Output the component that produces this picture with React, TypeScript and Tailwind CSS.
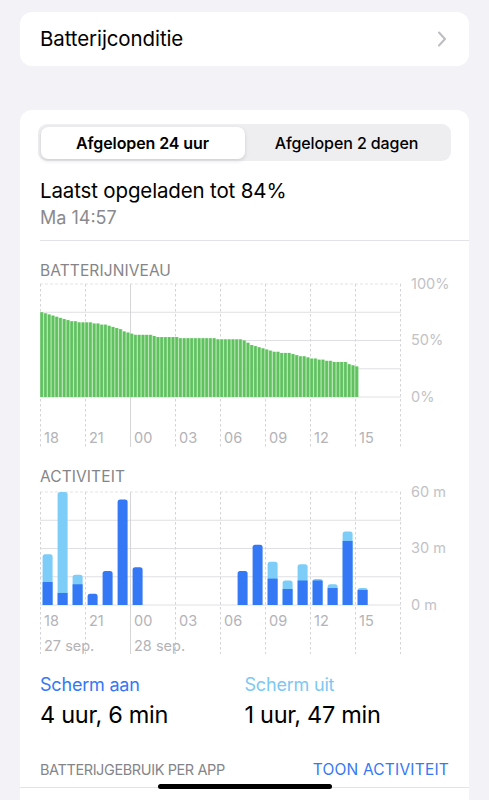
import React from "react";

const FONT = 'Inter, "Noto Sans", "Liberation Sans", sans-serif';

const batteryPts: [number, number][] = [
  [0, 75.5], [10, 73], [23, 69], [32, 67], [43, 66], [57, 65], [70, 63], [80, 60], [87, 57], [93, 55],
  [107, 55], [117, 53.5], [147, 52], [150, 52.5], [180, 51.3], [203, 50.5], [210, 46.6], [223, 42.5],
  [232, 40], [250, 38.6], [263, 35.7], [283, 32.7], [297, 31], [305, 30.5], [310, 28.3], [318, 26],
];

function levelAt(x: number) {
  for (let i = 0; i < batteryPts.length - 1; i++) {
    const [x0, y0] = batteryPts[i];
    const [x1, y1] = batteryPts[i + 1];
    if (x >= x0 && x <= x1) return y0 + ((y1 - y0) * (x - x0)) / (x1 - x0);
  }
  return batteryPts[batteryPts.length - 1][1];
}

const hours = ["18", "21", "00", "03", "06", "09", "12", "15"];

function Grid({ top, bottom, lineEnd }: { top: number; bottom: number; lineEnd: number }) {
  const step = (bottom - top) / 4;
  return (
    <g>
      {[0, 1, 2, 3, 4].map((k) => (
        <line
          key={k}
          x1={0}
          x2={361}
          y1={top + step * k}
          y2={top + step * k}
          stroke={k === 0 ? "#e3e3e7" : "#e0e0e4"}
          strokeWidth={1}
          strokeDasharray={k === 0 ? "3 2" : undefined}
        />
      ))}
      {Array.from({ length: 9 }).map((_, k) => (
        <line
          key={k}
          x1={0.5 + 45 * k}
          x2={0.5 + 45 * k}
          y1={top}
          y2={lineEnd}
          stroke={k === 2 ? "#d6d6da" : "#d3d3d8"}
          strokeWidth={1}
          strokeDasharray={k === 2 ? undefined : "2.5 2.5"}
        />
      ))}
    </g>
  );
}

function AxisText({ x, y, children, fill = "#b3b3b8" }: { x: number; y: number; children: React.ReactNode; fill?: string }) {
  return (
    <text x={x} y={y} fontSize={14.5} fill={fill} fontFamily={FONT} dominantBaseline="middle">
      {children}
    </text>
  );
}

function BatteryChart() {
  const top = 4;
  const bottom = 117;
  const h = bottom - top;
  const bars = Array.from({ length: 85 }).map((_, i) => {
    const x = i * 3.75;
    const lvl = Math.round(levelAt(x + 1.2));
    const y = bottom - (lvl / 100) * h;
    return { x, y };
  });
  return (
    <svg width={429} height={170} className="block overflow-visible">
      <Grid top={top} bottom={bottom} lineEnd={167} />
      {bars.map((b, i) => (
        <g key={i}>
          <rect x={b.x} y={b.y} width={3.75} height={bottom - b.y} fill="#ace1a9" />
          <rect x={b.x + 0.4} y={b.y} width={2.5} height={bottom - b.y} fill="#5fc25f" />
        </g>
      ))}
      <AxisText x={371} y={top + 1} fill="#c2c2c6">100%</AxisText>
      <AxisText x={371} y={top + h / 2 + 1} fill="#c2c2c6">50%</AxisText>
      <AxisText x={371} y={bottom + 1} fill="#c2c2c6">0%</AxisText>
      {hours.map((t, k) => (
        <AxisText key={t} x={45 * k + 4} y={159}>
          {t}
        </AxisText>
      ))}
    </svg>
  );
}

const activity: { i: number; dark: number; light?: number }[] = [
  { i: 0, dark: 12.2, light: 27 },
  { i: 1, dark: 6.4, light: 60 },
  { i: 2, dark: 11, light: 16 },
  { i: 3, dark: 6 },
  { i: 4, dark: 18 },
  { i: 5, dark: 56 },
  { i: 6, dark: 20 },
  { i: 13, dark: 18 },
  { i: 14, dark: 32 },
  { i: 15, dark: 14, light: 23 },
  { i: 16, dark: 8.5, light: 13 },
  { i: 17, dark: 13, light: 21.6 },
  { i: 18, dark: 13, light: 13.8 },
  { i: 19, dark: 9, light: 11 },
  { i: 20, dark: 34, light: 39 },
  { i: 21, dark: 8, light: 9 },
];

function roundedTop(x: number, y: number, w: number, bottom: number, r: number) {
  const rr = Math.min(r, (bottom - y) / 2);
  return `M${x},${bottom} L${x},${y + rr} Q${x},${y} ${x + rr},${y} L${x + w - rr},${y} Q${x + w},${y} ${x + w},${y + rr} L${x + w},${bottom} Z`;
}

function ActivityChart() {
  const top = 6;
  const bottom = 119;
  const h = bottom - top;
  const ym = (m: number) => bottom - (m / 60) * h;
  return (
    <svg width={429} height={170} className="block overflow-visible">
      <Grid top={top} bottom={bottom} lineEnd={168} />
      {activity.map((a) => {
        const x = 15 * a.i + 2.6;
        const w = 10;
        return (
          <g key={a.i}>
            {a.light !== undefined && <path d={roundedTop(x, ym(a.light), w, bottom, 2.5)} fill="#7ecdf8" />}
            {a.light !== undefined ? (
              <rect x={x} y={ym(a.dark)} width={w} height={bottom - ym(a.dark)} fill="#3478f6" />
            ) : (
              <path d={roundedTop(x, ym(a.dark), w, bottom, 2.5)} fill="#3478f6" />
            )}
          </g>
        );
      })}
      <AxisText x={371} y={top + 1} fill="#c2c2c6">60 m</AxisText>
      <AxisText x={371} y={top + h / 2 + 1} fill="#c2c2c6">30 m</AxisText>
      <AxisText x={371} y={bottom + 1} fill="#c2c2c6">0 m</AxisText>
      {hours.map((t, k) => (
        <AxisText key={t} x={45 * k + 4} y={136}>
          {t}
        </AxisText>
      ))}
      <AxisText x={4} y={161}>27 sep.</AxisText>
      <AxisText x={94} y={161}>28 sep.</AxisText>
    </svg>
  );
}

export default function App() {
  return (
    <div className="relative h-[800px] w-[489px] overflow-hidden bg-[#f2f2f7] px-5 pt-3" style={{ fontFamily: FONT }}>
      <div className="flex h-[54px] items-center justify-between rounded-[12px] bg-white pl-5 pr-[22px]">
        <span className="text-[20.5px] tracking-[-0.1px] text-black">Batterijconditie</span>
        <svg width="10" height="16" viewBox="0 0 10 16">
          <path d="M2 1.5 L8 8 L2 14.5" fill="none" stroke="#bdbdc1" strokeWidth="2" strokeLinecap="round" strokeLinejoin="round" />
        </svg>
      </div>

      <div className="mt-[44px] rounded-t-[12px] bg-white pt-[14px]">
        <div className="mx-[18px] flex h-[37px] rounded-[9px] bg-[#eeeef0] p-[2.5px]">
          <div className="flex flex-1 items-center justify-center rounded-[7px] bg-white text-[16px] font-semibold tracking-[-0.1px] text-black shadow-[0_2px_4px_rgba(0,0,0,0.12),0_0_1px_rgba(0,0,0,0.08)]">
            Afgelopen 24 uur
          </div>
          <div className="flex flex-1 items-center justify-center text-[16px] font-medium tracking-[-0.1px] text-black">
            Afgelopen 2 dagen
          </div>
        </div>

        <div className="mt-[18px] px-5 text-[20.5px] leading-[24px] tracking-[-0.15px] text-black">Laatst opgeladen tot 84%</div>
        <div className="mt-[5px] px-5 text-[18px] leading-[20px] text-[#8a8a8e]">Ma 14:57</div>

        <div className="ml-5 mt-[12px] h-px bg-[#e3e3e7]" />

        <div className="mt-[21px] px-5 text-[15.5px] leading-[18px] tracking-[0.1px] text-[#858589]">BATTERIJNIVEAU</div>
        <div className="pl-5">
          <BatteryChart />
        </div>

        <div className="mt-[18px] px-5 text-[15.5px] leading-[18px] tracking-[0.1px] text-[#858589]">ACTIVITEIT</div>
        <div className="pl-5">
          <ActivityChart />
        </div>

        <div className="mt-[18px] grid grid-cols-2 px-5">
          <div>
            <div className="text-[18px] leading-[22px] tracking-[-0.2px] text-[#3478f6]">Scherm aan</div>
            <div className="mt-[5px] text-[23.5px] leading-[28px] tracking-[-0.3px] text-black">4 uur, 6 min</div>
          </div>
          <div>
            <div className="text-[18px] leading-[22px] tracking-[-0.2px] text-[#7cc8f4]">Scherm uit</div>
            <div className="mt-[5px] text-[23.5px] leading-[28px] tracking-[-0.3px] text-black">1 uur, 47 min</div>
          </div>
        </div>

        <div className="mt-[32px] flex items-center justify-between px-5 pb-[8px] leading-[18px]">
          <span className="text-[14.5px] tracking-[-0.4px] text-[#858589]">BATTERIJGEBRUIK PER APP</span>
          <span className="text-[15.5px] tracking-[0.2px] text-[#3478f6]">TOON ACTIVITEIT</span>
        </div>
        <div className="h-px bg-[#e3e3e7]" />
        <div className="h-[40px]" />
      </div>

      <div className="absolute left-[158px] top-[784px] h-[5px] w-[174px] rounded-full bg-black" />
    </div>
  );
}
